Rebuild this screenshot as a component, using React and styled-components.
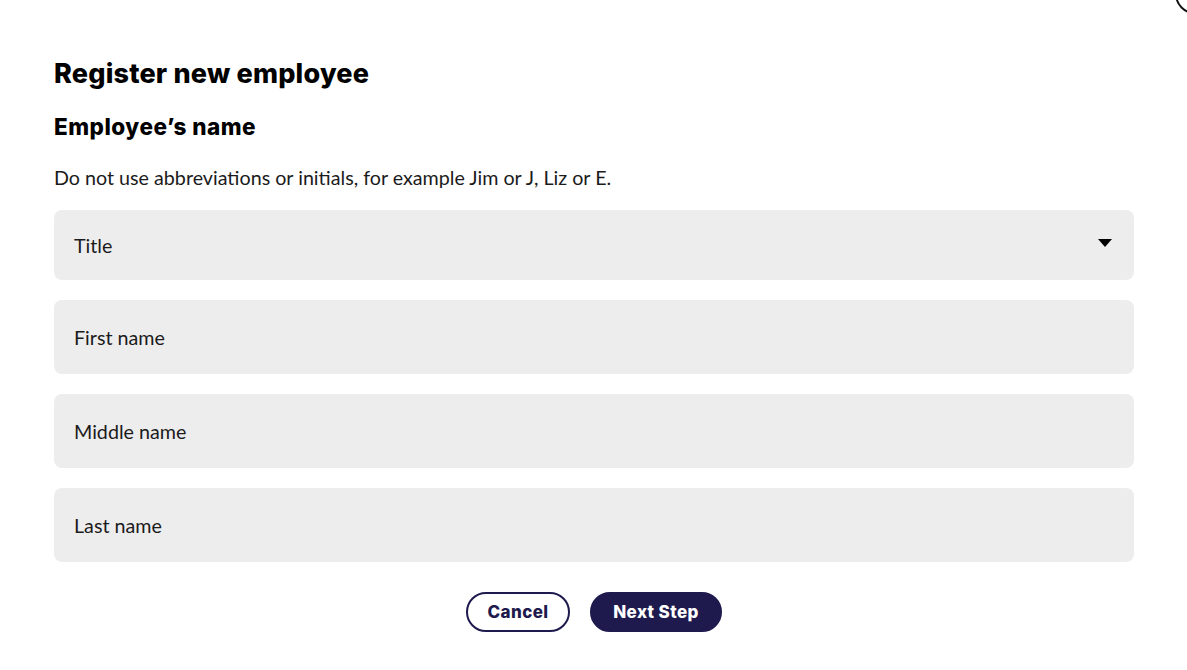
import React from "react";
import styled, { createGlobalStyle } from "styled-components";

const GlobalStyle = createGlobalStyle`
    html, body {
        margin: 0;
        padding: 0;
        background: #ffffff;
    }

    body {
        font-family: Lato, "Noto Sans", sans-serif;
        color: #1b1b1b;
        overflow: hidden;
    }
`;

const Page = styled.div`
    position: relative;
    width: 1187px;
    height: 670px;
    overflow: hidden;
    box-sizing: border-box;
    padding: 54px 53px 0 54px;
`;

const CloseRing = styled.span`
    position: absolute;
    top: -26px;
    left: 1175px;
    width: 36px;
    height: 36px;
    border: 2px solid #111;
    border-radius: 50%;
`;

const Title = styled.h1`
    margin: 0;
    font-family: Inter, "Noto Sans", sans-serif;
    font-weight: 800;
    font-size: 27px;
    line-height: 40px;
    color: #000;
    letter-spacing: 0.2px;
`;

const SubTitle = styled.h2`
    margin: 17px 0 0;
    font-family: Inter, "Noto Sans", sans-serif;
    font-weight: 800;
    font-size: 22.5px;
    line-height: 32px;
    color: #000;
    letter-spacing: 0.5px;
`;

const Hint = styled.p`
    margin: 22px 0 0;
    font-size: 19.7px;
    line-height: 26px;
`;

const Fields = styled.div`
    display: flex;
    flex-direction: column;
    gap: 20px;
    margin-top: 19px;
`;

const Field = styled.div`
    display: flex;
    align-items: center;
    justify-content: space-between;
    height: ${({ $tall }) => ($tall ? "74px" : "70px")};
    padding: 0 22px 0 20px;
    background: #ededed;
    border-radius: 8px;
    font-size: 19.7px;
    color: #1b1b1b;
`;

const Caret = styled.span`
    width: 0;
    height: 0;
    border-left: 7px solid transparent;
    border-right: 7px solid transparent;
    border-top: 8px solid #000;
    margin-top: -4px;
`;

const Actions = styled.div`
    display: flex;
    justify-content: center;
    gap: 20px;
    margin-top: 30px;
`;

const Button = styled.button`
    height: 40px;
    padding: 0 16px;
    border-radius: 20px;
    border: 2px solid #1e1a4d;
    background: ${({ $primary }) => ($primary ? "#1e1a4d" : "#fff")};
    color: ${({ $primary }) => ($primary ? "#fff" : "#1e1a4d")};
    font-family: Inter, "Noto Sans", sans-serif;
    font-weight: 800;
    font-size: 17px;
    letter-spacing: 0.4px;
    min-width: ${({ $primary }) => ($primary ? "132px" : "104px")};
    cursor: pointer;
`;

export default function App() {
    return (
        <>
            <GlobalStyle />
            <Page>
                <CloseRing />
                <Title>Register new employee</Title>
                <SubTitle>Employee’s name</SubTitle>
                <Hint>Do not use abbreviations or initials, for example Jim or J, Liz or E.</Hint>
                <Fields>
                    <Field>
                        <span>Title</span>
                        <Caret />
                    </Field>
                    <Field $tall>First name</Field>
                    <Field $tall>Middle name</Field>
                    <Field $tall>Last name</Field>
                </Fields>
                <Actions>
                    <Button>Cancel</Button>
                    <Button $primary>Next Step</Button>
                </Actions>
            </Page>
        </>
    );
}
